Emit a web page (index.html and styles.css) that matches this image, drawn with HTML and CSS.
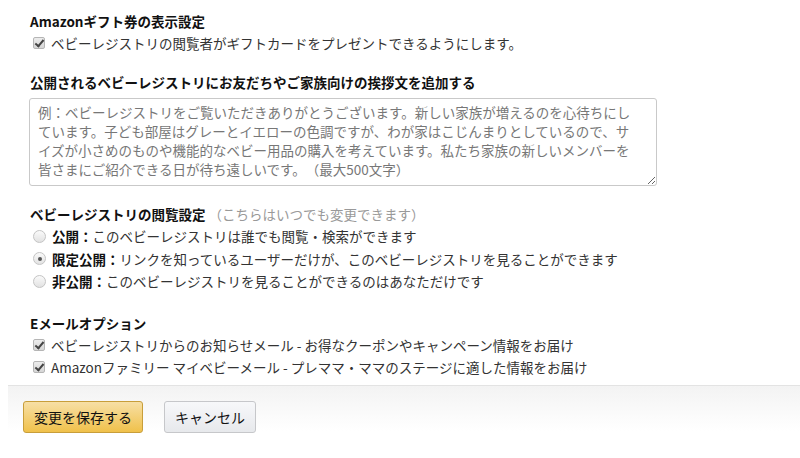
FILE: index.html
```html
<!DOCTYPE html>
<html lang="ja">
<head>
  <meta charset="utf-8">
  <title>ベビーレジストリの設定</title>
  <link rel="stylesheet" href="styles.css">
</head>
<body>
  <div class="settings">
    <div class="section">
      <h3>Amazonギフト券の表示設定</h3>
      <label class="row"><input type="checkbox" class="check" checked> ベビーレジストリの閲覧者がギフトカードをプレゼントできるようにします。</label>
    </div>

    <div class="section">
      <h3>公開されるベビーレジストリにお友だちやご家族向けの挨拶文を追加する</h3>
      <textarea class="greeting" placeholder="例：ベビーレジストリをご覧いただきありがとうございます。新しい家族が増えるのを心待ちにしています。子ども部屋はグレーとイエローの色調ですが、わが家はこじんまりとしているので、サイズが小さめのものや機能的なベビー用品の購入を考えています。私たち家族の新しいメンバーを皆さまにご紹介できる日が待ち遠しいです。（最大500文字）"></textarea>
    </div>

    <div class="section">
      <h3>ベビーレジストリの閲覧設定 <span class="note">（こちらはいつでも変更できます）</span></h3>
      <label class="row radio-row"><input type="radio" name="privacy" class="radio"> <b>公開：</b>このベビーレジストリは誰でも閲覧・検索ができます</label>
      <label class="row radio-row"><input type="radio" name="privacy" class="radio" checked> <b>限定公開：</b>リンクを知っているユーザーだけが、このベビーレジストリを見ることができます</label>
      <label class="row radio-row"><input type="radio" name="privacy" class="radio"> <b>非公開：</b>このベビーレジストリを見ることができるのはあなただけです</label>
    </div>

    <div class="section email">
      <h3>Eメールオプション</h3>
      <label class="row"><input type="checkbox" class="check" checked> ベビーレジストリからのお知らせメール - お得なクーポンやキャンペーン情報をお届け</label>
      <label class="row"><input type="checkbox" class="check" checked> Amazonファミリー マイベビーメール - プレママ・ママのステージに適した情報をお届け</label>
    </div>

    <div class="actions">
      <button class="btn btn-save">変更を保存する</button>
      <button class="btn btn-cancel">キャンセル</button>
    </div>
  </div>
</body>
</html>
```

FILE: styles.css
```css
body {
  margin: 0;
  font-family: "Noto Sans CJK JP", "Noto Sans", sans-serif;
  font-size: 13.5px;
  color: #333;
  background: #fff;
  text-spacing-trim: space-all;
}

.settings {
  padding: 10px 0 0 8px;
}

.section {
  padding-left: 22px;
  margin-bottom: 17px;
}

h3 {
  margin: 0;
  font-size: 13.5px;
  line-height: 22px;
  font-weight: bold;
  color: #111;
}

.note {
  font-weight: normal;
  color: #999;
}

.row {
  display: flex;
  align-items: center;
  height: 22px;
  padding-left: 3px;
  white-space: nowrap;
}

.row b {
  color: #111;
}

.radio-row {
  height: 22.5px;
}

.check,
.radio {
  appearance: none;
  -webkit-appearance: none;
  width: 12px;
  height: 12px;
  margin: 0 6px 0 0;
  border: 1px solid #b5b5b5;
  background: linear-gradient(#f4f4f4, #dcdcdc);
  position: relative;
  flex: none;
}

.check {
  border-radius: 2px;
  background: linear-gradient(#ececec, #d6d6d6);
}

.check:checked::after {
  content: "";
  position: absolute;
  left: 3px;
  top: 0px;
  width: 3px;
  height: 7px;
  border: solid #444;
  border-width: 0 2px 2px 0;
  transform: rotate(40deg);
}

.radio {
  width: 13px;
  height: 13px;
  border-radius: 50%;
  border-color: #c4c4c4;
  background: linear-gradient(#fafafa, #e2e2e2);
}

.radio:checked::after {
  content: "";
  position: absolute;
  left: 3.5px;
  top: 3.5px;
  width: 4px;
  height: 4px;
  border-radius: 50%;
  background: #555;
}

.greeting {
  display: block;
  box-sizing: border-box;
  width: 628px;
  height: 88px;
  margin: 5px 0 0 -1px;
  padding: 4px 18px 4px 8px;
  border: 1px solid #c9c9c9;
  border-radius: 3px;
  font-family: inherit;
  font-size: 13.5px;
  line-height: 19px;
  color: #333;
  resize: both;
  text-spacing-trim: space-all;
}

.greeting::placeholder {
  color: #777;
}

.email {
  margin-top: 19px;
  margin-bottom: 7px;
}

.actions {
  display: flex;
  gap: 21px;
  padding: 15px 15px 24px;
  border-top: 1px solid #e3e3e3;
  background: linear-gradient(#f3f3f3, #fff 45px);
}

.btn {
  height: 32px;
  padding: 0;
  border-radius: 3px;
  font-family: inherit;
  font-size: 14px;
  color: #111;
  white-space: nowrap;
  cursor: pointer;
}

.btn-save {
  width: 120px;
  border: 1px solid #c89e3a;
  background: linear-gradient(#f7dfa5, #f0c14b);
}

.btn-cancel {
  width: 92px;
  border: 1px solid #c6c7ca;
  background: linear-gradient(#f7f8fa, #e7e9ec);
}
```
